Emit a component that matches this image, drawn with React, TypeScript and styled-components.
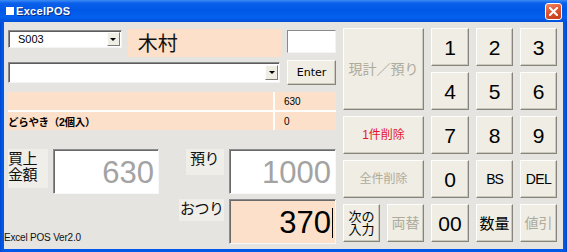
import styled, { createGlobalStyle } from "styled-components"

const GlobalStyle = createGlobalStyle`
  html, body {
    margin: 0;
    padding: 0;
    background: #ffffff;
  }
  body {
    font-family: "Noto Sans CJK JP", "Liberation Sans", sans-serif;
  }
  * {
    box-sizing: border-box;
  }
`

const PEACH = "#fde0c9"

const Window = styled.div`
  width: 567px;
  height: 252px;
  display: flex;
  flex-direction: column;
  background: #0054e3;
  overflow: hidden;
`

const TitleBar = styled.div`
  height: 22px;
  flex: none;
  display: flex;
  align-items: center;
  padding: 0 5px 0 6px;
  background: linear-gradient(
    180deg,
    #3c8cf6 0%,
    #0b60ea 14%,
    #0058e6 45%,
    #0460ee 78%,
    #0150d8 100%
  );
`

const AppIcon = styled.span`
  width: 8px;
  height: 8px;
  background: #ffffff;
  margin-right: 2px;
`

const Title = styled.span`
  flex: 1;
  font-family: "Liberation Sans", sans-serif;
  font-weight: bold;
  font-size: 11px;
  letter-spacing: 0.3px;
  color: #ffffff;
  text-shadow: 1px 1px 0 #0a2a8a;
`

const CloseButton = styled.span`
  width: 17px;
  height: 17px;
  margin-top: 1px;
  border: 1px solid #ffffff;
  border-radius: 3px;
  background: linear-gradient(160deg, #f08a6a 0%, #e0542f 45%, #c23b1c 100%);
  display: flex;
  align-items: center;
  justify-content: center;
`

const Frame = styled.div`
  flex: 1;
  display: flex;
  padding: 0 4px 4px 4px;
  background: linear-gradient(90deg, #0048d0 0px, #0058e6 2px, #0058e6 calc(100% - 2px), #0040c0 100%);
`

const Client = styled.div`
  flex: 1;
  display: flex;
  gap: 7px;
  padding: 6px 6px 5px 4px;
  background: #e5e4e0;
`

const LeftPanel = styled.div`
  width: 328px;
  margin-top: 1px;
  display: flex;
  flex-direction: column;
`

const Row = styled.div<{ $height: number; $top?: number; $gap: number }>`
  height: ${({ $height }) => $height}px;
  margin-top: ${({ $top }) => $top ?? 0}px;
  display: flex;
  align-items: flex-start;
  gap: ${({ $gap }) => $gap}px;
`

const Combo = styled.div<{ $width: number; $height: number; $top: number }>`
  width: ${({ $width }) => $width}px;
  height: ${({ $height }) => $height}px;
  margin-top: ${({ $top }) => $top}px;
  display: flex;
  align-items: center;
  background: #ffffff;
  border: 1px solid;
  border-color: #8a8a8a #f4f4f4 #f4f4f4 #8a8a8a;
  box-shadow: inset 1px 1px 0 #5c5c5c;
  padding: 1px 1px 1px 9px;
  font-family: "Liberation Sans", sans-serif;
  font-size: 11px;
  color: #000;
`

const ComboText = styled.span`
  flex: 1;
`

const ComboArrow = styled.span`
  width: 13px;
  height: 100%;
  max-height: 15px;
  background: #efede4;
  border: 1px solid;
  border-color: #fdfdfb #7e7c74 #7e7c74 #fdfdfb;
  display: flex;
  align-items: center;
  justify-content: center;

  &::after {
    content: "";
    border-left: 3px solid transparent;
    border-right: 3px solid transparent;
    border-top: 3px solid #000;
  }
`

const NameBox = styled.div`
  width: 154px;
  height: 28px;
  background: ${PEACH};
  padding-left: 10px;
  display: flex;
  align-items: center;
  font-size: 20px;
  line-height: 1;
  color: #111;
`

const SmallBox = styled.div`
  width: 49px;
  height: 23px;
  margin-top: 1px;
  background: #ffffff;
  border: 1px solid;
  border-color: #8a8a8a #f4f4f4 #f4f4f4 #8a8a8a;
`

const Key = styled.button<{
  $tone?: "normal" | "muted" | "danger"
  $size?: number
  $col?: string
  $row?: string
  $spacing?: number
}>`
  grid-column: ${({ $col }) => $col ?? "auto"};
  grid-row: ${({ $row }) => $row ?? "auto"};
  margin: 0;
  padding: 0;
  background: #efede4;
  border: 1px solid;
  border-color: #fdfdfb #86847b #86847b #fdfdfb;
  box-shadow: inset -1px -1px 0 #cbc8bc;
  font-family: "Liberation Sans", "Noto Sans CJK JP", sans-serif;
  font-size: ${({ $size }) => $size ?? 21}px;
  letter-spacing: ${({ $spacing }) => $spacing ?? 0}px;
  line-height: 1;
  color: ${({ $tone }) =>
    $tone === "muted" ? "#aeab9d" : $tone === "danger" ? "#e5162c" : "#000"};
  display: flex;
  align-items: center;
  justify-content: center;
  text-align: center;
  white-space: pre-line;
`

const EnterKey = styled(Key)`
  width: 49px;
  height: 25px;
  font-family: "DejaVu Sans", sans-serif;
  font-size: 11px;
`

const ItemTable = styled.div`
  margin-top: 7px;
  display: grid;
  grid-template-columns: 265px 1fr;
  grid-template-rows: 18px 18px;
  gap: 2px;
  background: #ffffff;
`

const ItemCell = styled.div<{ $bold?: boolean; $pad: number }>`
  background: ${PEACH};
  display: flex;
  align-items: center;
  padding-left: ${({ $pad }) => $pad}px;
  font-family: "Liberation Sans", "Noto Sans CJK JP", sans-serif;
  font-size: ${({ $bold }) => ($bold ? 10.5 : 10)}px;
  font-weight: ${({ $bold }) => ($bold ? "bold" : "normal")};
  letter-spacing: ${({ $bold }) => ($bold ? -0.3 : 0)}px;
  color: #000;
`

const Totals = styled.div`
  margin-top: 19px;
  display: grid;
  grid-template-columns: 45px 106px 70px 107px;
  grid-template-rows: 45px 45px;
  row-gap: 5px;
`

const FieldLabel = styled.div<{
  $col: string
  $row: string
  $width: number
  $height: number
  $indent?: number
}>`
  grid-column: ${({ $col }) => $col};
  grid-row: ${({ $row }) => $row};
  justify-self: end;
  align-self: start;
  width: ${({ $width }) => $width}px;
  height: ${({ $height }) => $height}px;
  margin-right: 5px;
  padding: 1px 0 0 ${({ $indent }) => $indent ?? 0}px;
  background: #efeee8;
  font-size: 15px;
  line-height: 16px;
  letter-spacing: -0.5px;
  color: #111;
  white-space: pre;
`

const AmountBox = styled.div<{ $col: string; $row: string; $active?: boolean }>`
  grid-column: ${({ $col }) => $col};
  grid-row: ${({ $row }) => $row};
  background: ${({ $active }) => ($active ? PEACH : "#ffffff")};
  border: 1px solid;
  border-color: #8c8c8c #f8f8f8 #f8f8f8 #8c8c8c;
  box-shadow: inset 1px 1px 0 #6a6a6a;
  display: flex;
  align-items: center;
  justify-content: flex-end;
  padding-right: ${({ $active }) => ($active ? 2 : 4)}px;
  padding-top: 2px;
  font-family: "Liberation Sans", sans-serif;
  font-size: 31px;
  line-height: 1;
  color: ${({ $active }) => ($active ? "#000" : "#a3a3a3")};
`

const Caret = styled.span`
  width: 1px;
  height: 30px;
  margin-left: 1px;
  background: #000;
`

const Version = styled.div`
  grid-column: 1 / 3;
  grid-row: 2;
  align-self: end;
  margin-left: -4px;
  margin-bottom: 1px;
  font-family: "Liberation Sans", sans-serif;
  font-size: 10px;
  letter-spacing: -0.2px;
  color: #111;
`

const Keypad = styled.div`
  display: grid;
  grid-template-columns: 37px 37px 38px 37px 37px;
  grid-template-rows: repeat(5, 38px);
  gap: 6px 7px;
`

const digits: [string, string, string][] = [
  ["1", "3", "1"],
  ["2", "4", "1"],
  ["3", "5", "1"],
  ["4", "3", "2"],
  ["5", "4", "2"],
  ["6", "5", "2"],
  ["7", "3", "3"],
  ["8", "4", "3"],
  ["9", "5", "3"],
  ["0", "3", "4"],
]

export default function App() {
  return (
    <>
      <GlobalStyle />
      <Window>
        <TitleBar>
          <AppIcon />
          <Title>ExcelPOS</Title>
          <CloseButton>
            <svg width="9" height="9" viewBox="0 0 9 9">
              <path d="M1 1 L8 8 M8 1 L1 8" stroke="#fff" strokeWidth="2" strokeLinecap="square" />
            </svg>
          </CloseButton>
        </TitleBar>
        <Frame>
          <Client>
            <LeftPanel>
              <Row $height={28} $gap={6}>
                <Combo $width={114} $height={18} $top={1}>
                  <ComboText>S003</ComboText>
                  <ComboArrow />
                </Combo>
                <NameBox>木村</NameBox>
                <SmallBox />
              </Row>
              <Row $height={25} $top={3} $gap={7}>
                <Combo $width={272} $height={21} $top={2}>
                  <ComboText />
                  <ComboArrow />
                </Combo>
                <EnterKey>Enter</EnterKey>
              </Row>
              <ItemTable>
                <ItemCell $pad={0} />
                <ItemCell $pad={9}>630</ItemCell>
                <ItemCell $pad={0} $bold>
                  どらやき（2個入）
                </ItemCell>
                <ItemCell $pad={9}>0</ItemCell>
              </ItemTable>
              <Totals>
                <FieldLabel $col="1" $row="1" $width={40} $height={39}>
                  {"買上\n金額"}
                </FieldLabel>
                <AmountBox $col="2" $row="1">630</AmountBox>
                <FieldLabel $col="3" $row="1" $width={38} $height={26} $indent={4}>
                  預り
                </FieldLabel>
                <AmountBox $col="4" $row="1">1000</AmountBox>
                <Version>Excel POS Ver2.0</Version>
                <FieldLabel $col="3" $row="2" $width={45} $height={22} $indent={1}>
                  おつり
                </FieldLabel>
                <AmountBox $col="4" $row="2" $active>
                  370
                  <Caret />
                </AmountBox>
              </Totals>
            </LeftPanel>
            <Keypad>
              <Key $col="1 / 3" $row="1 / 3" $tone="muted" $size={14}>
                現計／預り
              </Key>
              <Key $col="1 / 3" $row="3" $tone="danger" $size={12}>
                1件削除
              </Key>
              <Key $col="1 / 3" $row="4" $tone="muted" $size={12}>
                全件削除
              </Key>
              {digits.map(([label, col, row]) => (
                <Key key={label} $col={col} $row={row}>
                  {label}
                </Key>
              ))}
              <Key $col="4" $row="4" $size={14} $spacing={-1}>
                BS
              </Key>
              <Key $col="5" $row="4" $size={14} $spacing={-0.5}>
                DEL
              </Key>
              <Key $col="1" $row="5" $size={13}>
                {"次の\n入力"}
              </Key>
              <Key $col="2" $row="5" $size={14} $tone="muted">
                両替
              </Key>
              <Key $col="3" $row="5">
                00
              </Key>
              <Key $col="4" $row="5" $size={15}>
                数量
              </Key>
              <Key $col="5" $row="5" $size={14} $tone="muted">
                値引
              </Key>
            </Keypad>
          </Client>
        </Frame>
      </Window>
    </>
  )
}
